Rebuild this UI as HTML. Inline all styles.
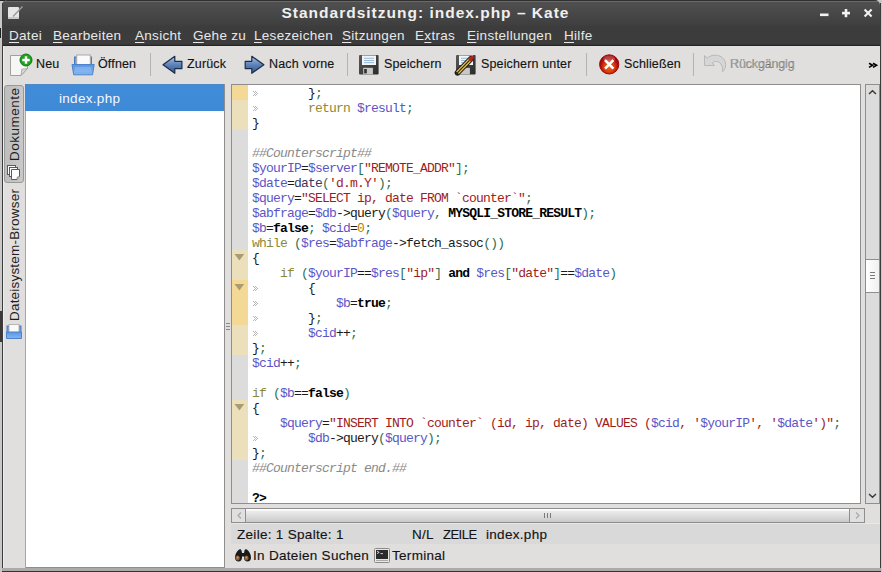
<!DOCTYPE html>
<html><head><meta charset="utf-8">
<style>
*{margin:0;padding:0;box-sizing:border-box}
html,body{width:882px;height:572px;overflow:hidden;background:#c8c8c8;font-family:"Liberation Sans",sans-serif}
.a{position:absolute}
#win{position:absolute;left:2px;top:0;width:878px;height:572px;background:#e0dfdd;overflow:hidden;border-radius:5px 5px 0 0}
#title{position:absolute;left:0;top:0;width:878px;height:46px;background:linear-gradient(#303030 0,#303030 1px,#6a6a6a 1px,#6a6a6a 2px,#505050 2px,#3e3e3e 26px,#3c3c3c 26px,#3c3c3c 44px,#353535 44px,#353535 45px,#262626 45px,#262626 46px)}
#ttext{position:absolute;left:279.5px;top:4px;color:#f0f0f0;font-weight:bold;font-size:15.5px;letter-spacing:1px;white-space:nowrap}
.menu{position:absolute;top:28px;color:#e8e8e8;font-size:13.5px;letter-spacing:0.3px;white-space:nowrap}
.menu u{text-decoration:underline;text-underline-offset:2px}
.tt{position:absolute;top:57px;font-size:12.5px;letter-spacing:0.15px;color:#141414;-webkit-text-stroke:0.15px #141414;white-space:nowrap}
.sep{position:absolute;top:53px;width:1px;height:23px;background:#b5b3b0}
#code{position:absolute;left:252px;top:86px;font-family:"Liberation Mono",monospace;font-size:13px;letter-spacing:-0.8px;line-height:15px;white-space:pre;color:#1a1a1a}
.v{color:#5b55c8}.k{color:#8a8a3a}.b{color:#2f6f50}.s{color:#a01c1c}.c{color:#8a8a8a;font-style:italic}.n{color:#b08000}.K{font-weight:bold;color:#000}.f{color:#3c3660}
.st{position:absolute;font-size:13.5px;letter-spacing:0.3px;color:#141414;-webkit-text-stroke:0.15px #141414;white-space:nowrap}

</style></head><body>
<div id="win">
 <div id="title"></div>
 <div id="ttext">Standardsitzung: index.php – Kate</div>
 <div class="menu" style="left:7px"><u>D</u>atei</div>
 <div class="menu" style="left:51px"><u>B</u>earbeiten</div>
 <div class="menu" style="left:133px"><u>A</u>nsicht</div>
 <div class="menu" style="left:191px"><u>G</u>ehe zu</div>
 <div class="menu" style="left:252px"><u>L</u>esezeichen</div>
 <div class="menu" style="left:340px"><u>S</u>itzungen</div>
 <div class="menu" style="left:413px">E<u>x</u>tras</div>
 <div class="menu" style="left:465px"><u>E</u>instellungen</div>
 <div class="menu" style="left:562px"><u>H</u>ilfe</div>
</div>

<div class="a" style="left:0;top:311px;width:2px;height:31px;background:#3a3a3a"></div>
<div class="a" style="left:0;top:28px;width:1px;height:10px;background:#202020"></div>
<div class="a" style="left:0;top:0;width:5px;height:1px;background:#222"></div>
<!-- title icons -->
<svg class="a" style="left:0;top:0" width="882" height="26">
 <rect x="8" y="7" width="11" height="12" rx="1" fill="#e6e6e6"/>
 <rect x="8" y="17" width="11" height="2" fill="#c8c8c8"/>
 <path d="M13 16.5 L22.5 6.5" stroke="#9a9a9a" stroke-width="1.4"/>
 <rect x="820" y="13.5" width="8.5" height="2.6" fill="#f2f2f2"/>
 <rect x="842" y="11.8" width="8" height="2.6" fill="#f2f2f2"/>
 <rect x="844.7" y="9" width="2.6" height="8.2" fill="#f2f2f2"/>
 <path d="M864.6 9.6 L871.6 16.6 M871.6 9.6 L864.6 16.6" stroke="#f2f2f2" stroke-width="2.1"/>
</svg>

<!-- toolbar icons -->
<svg class="a" style="left:0;top:46px" width="882" height="38">
 <defs>
  <linearGradient id="ar" x1="0" y1="0" x2="0" y2="1"><stop offset="0" stop-color="#a8c4e6"/><stop offset="0.5" stop-color="#5c82b8"/><stop offset="1" stop-color="#35588e"/></linearGradient>
  <linearGradient id="tray" x1="0" y1="0" x2="0" y2="1"><stop offset="0" stop-color="#5b95e0"/><stop offset="1" stop-color="#86b6ef"/></linearGradient>
  <radialGradient id="red" cx="0.5" cy="0.62" r="0.55"><stop offset="0" stop-color="#ee6a12"/><stop offset="0.5" stop-color="#d8400e"/><stop offset="0.78" stop-color="#b81010"/><stop offset="1" stop-color="#940404"/></radialGradient>
  <linearGradient id="fl" x1="0" y1="0" x2="1" y2="1"><stop offset="0" stop-color="#5a5a5a"/><stop offset="1" stop-color="#2a2a2a"/></linearGradient>
 </defs>
 <g transform="translate(0,-46)">
  <!-- Neu -->
  <path d="M10.5 55.5 H27.5 V68.5 L21 75.5 H10.5 Z" fill="#f6f6f6" stroke="#a0a0a0"/>
  <path d="M21 75.5 L21.8 69.2 L27.5 68.5 Z" fill="#d8d8d8" stroke="#a0a0a0" stroke-width="0.8"/>
  <circle cx="26" cy="60" r="6" fill="#22a022" stroke="#0e7a0e" stroke-width="1"/>
  <rect x="22.3" y="58.8" width="7.4" height="2.5" fill="#fff"/>
  <rect x="24.75" y="56.3" width="2.5" height="7.4" fill="#fff"/>
  <!-- Oeffnen -->
  <rect x="74.5" y="57" width="17" height="8" fill="#6f9fd8" stroke="#4a7cc0" stroke-width="1"/>
  <rect x="76.7" y="55" width="13.6" height="10" fill="#fafafa" stroke="#a8a8a8" stroke-width="1"/>
  <path d="M72 64.5 H94.2 L92.5 74.8 H73.7 Z" fill="url(#tray)" stroke="#4d82cc" stroke-width="1"/>
  <rect x="75" y="67" width="16" height="5" fill="#8dbaf0" opacity="0.6"/>
  <!-- Zurueck -->
  <path d="M163 64.8 L174.8 56.3 V61.3 H181.9 V68.6 H174.8 V73.3 Z" fill="url(#ar)" stroke="#1c2c48" stroke-width="1.2" stroke-linejoin="round"/>
  <!-- Nach vorne -->
  <path d="M263.9 64.8 L251.8 56.3 V61.3 H245.2 V68.6 H251.8 V73.3 Z" fill="url(#ar)" stroke="#1c2c48" stroke-width="1.2" stroke-linejoin="round"/>
  <!-- Speichern -->
  <rect x="359" y="55" width="19.6" height="19.6" rx="1" fill="url(#fl)"/>
  <rect x="362" y="55.5" width="14" height="9.5" fill="#f2f4f6"/>
  <rect x="364" y="57.8" width="10" height="0.9" fill="#8eb2d2"/>
  <rect x="364" y="60" width="10" height="0.9" fill="#8eb2d2"/>
  <rect x="364" y="62.2" width="10" height="0.9" fill="#8eb2d2"/>
  <rect x="363.2" y="67.8" width="9.7" height="6.6" fill="#c8c8c8"/>
  <rect x="364.2" y="69" width="2.6" height="4.4" fill="#2e2e2e"/>
  <!-- Speichern unter -->
  <rect x="456" y="55" width="19.6" height="19.6" rx="1" fill="url(#fl)"/>
  <rect x="459" y="55.5" width="14" height="9.5" fill="#f2f4f6"/>
  <rect x="461" y="57.8" width="10" height="0.9" fill="#8eb2d2"/>
  <rect x="461" y="60" width="10" height="0.9" fill="#8eb2d2"/>
  <rect x="461" y="62.2" width="10" height="0.9" fill="#8eb2d2"/>
  <rect x="460.2" y="67.8" width="9.7" height="6.6" fill="#c8c8c8"/>
  <path d="M457.5 72.8 L471 58.8" stroke="#1e1a10" stroke-width="5.6" stroke-linecap="round"/>
  <path d="M457.5 72.8 L471 58.8" stroke="#e6c452" stroke-width="3.8"/>
  <path d="M457.6 72.6 L470.6 59.2" stroke="#2a2208" stroke-width="1.1"/>
  <path d="M470.4 59.4 L471.9 57.9" stroke="#b82020" stroke-width="3.8" stroke-linecap="round"/>
  <path d="M455.5 74.8 L457.8 72.5" stroke="#303030" stroke-width="1.4"/>
  <!-- Schliessen -->
  <circle cx="609.2" cy="64.4" r="9.6" fill="url(#red)" stroke="#9a0808" stroke-width="1"/>
  <ellipse cx="609.2" cy="59" rx="6" ry="3.5" fill="#ffffff" opacity="0.22"/>
  <path d="M605 60.2 L613.4 68.6 M613.4 60.2 L605 68.6" stroke="#fff" stroke-width="2.6"/>
  <!-- Rueckgaengig (disabled) -->
  <path d="M704.5 55.5 L707.2 58.2 C711 54.5 719.5 53.5 723.8 59.2 C727 63.5 725.8 69 722.5 71.8 C723.2 67 721.2 62 716.5 61.4 C714.8 61.3 713.5 62 712.3 63 L714.5 65.5 H704.5 Z" fill="#d6d6d6" stroke="#b8b8b8" stroke-width="1" stroke-linejoin="round"/>
 </g>
</svg>

<div class="tt" style="left:36px">Neu</div>
<div class="tt" style="left:98px">Öffnen</div>
<div class="sep" style="left:150px"></div>
<div class="tt" style="left:187px">Zurück</div>
<div class="tt" style="left:269px">Nach vorne</div>
<div class="sep" style="left:347px"></div>
<div class="tt" style="left:384px">Speichern</div>
<div class="tt" style="left:481px">Speichern unter</div>
<div class="sep" style="left:586px"></div>
<div class="tt" style="left:624px">Schließen</div>
<div class="sep" style="left:693px"></div>
<div class="tt" style="left:730px;color:#a9a7a4;letter-spacing:-0.15px">Rückgängig</div>
<svg class="a" style="left:860px;top:56px" width="20" height="16"><path d="M9 7.2 L12.6 9.3 L9 11.4 M13 7.2 L16.6 9.3 L13 11.4" fill="none" stroke="#000" stroke-width="1.6"/></svg>

<!-- left tab bar -->
<div class="a" style="left:4px;top:85px;width:20px;height:98px;background:linear-gradient(90deg,#bdbdbd,#c9c9c9);border:1px solid #999999;border-radius:3px"></div>
<div class="a" style="left:4px;top:183px;width:20px;height:160px;border:1px solid transparent"></div>
<div class="a" style="left:25px;top:111px;width:1px;height:457px;background:#a4a4a4"></div>
<div class="a" style="left:2px;top:3px;width:1px;height:569px;background:#3c3c3c"></div>
<div class="a" style="left:880px;top:3px;width:1px;height:569px;background:#3c3c3c"></div>
<div class="a" style="left:3px;top:46px;width:1px;height:522px;background:#eeeeee"></div>
<div class="a" style="left:5px;top:86px;width:18px;height:72px;transform-origin:0 0"></div>
<div class="a" style="left:7px;top:160.5px;width:80px;height:16px;transform:rotate(-90deg);transform-origin:0 0;font-size:13.5px;letter-spacing:0.5px;color:#1e1e1e;white-space:nowrap;line-height:16px">Dokumente</div>
<div class="a" style="left:7px;top:320.5px;width:140px;height:16px;transform:rotate(-90deg);transform-origin:0 0;font-size:13.5px;letter-spacing:0.2px;color:#1e1e1e;white-space:nowrap;line-height:16px">Dateisystem-Browser</div>
<svg class="a" style="left:0;top:160px" width="26" height="190">
 <rect x="7.5" y="5.5" width="8" height="9" fill="#ffffff" stroke="#5a5a5a" stroke-width="1"/>
 <rect x="9.5" y="7.5" width="8" height="9" fill="#ffffff" stroke="#5a5a5a" stroke-width="1"/>
 <path d="M11.5 9.5 H19.5 V16.5 L17 19.5 H11.5 Z" fill="#ffffff" stroke="#5a5a5a" stroke-width="1"/>
 <path d="M17 19.5 L17.3 17 L19.5 16.5" fill="#dddddd" stroke="#7a7a7a" stroke-width="0.8"/>
 <rect x="7" y="166" width="14" height="8" fill="#6f9fd8" stroke="#4a7cc0" stroke-width="1"/>
 <rect x="9" y="164.5" width="10" height="8" fill="#fafafa" stroke="#a8a8a8" stroke-width="0.8"/>
 <path d="M6.5 172 H21.5 V178.5 H6.5 Z" fill="url(#tray)" stroke="#4d82cc" stroke-width="1"/>
</svg>

<!-- sidebar list -->
<div class="a" style="left:26px;top:84px;width:199px;height:484px;background:#fff;border-top:1px solid #9c9c9c;border-right:1px solid #8e8e8e;border-bottom:1px solid #8e8e8e"></div>
<div class="a" style="left:25px;top:84px;width:199px;height:27px;background:linear-gradient(#4f88c4 0,#4f88c4 1px,#408cd9 1px,#3e8ad7)"></div>
<div class="a" style="left:59px;top:91px;color:#f4f8ff;font-size:13.5px;letter-spacing:0.3px">index.php</div>
<!-- splitter grip -->
<div class="a" style="left:226px;top:323px;width:4px;height:1px;background:#8a8a8a"></div>
<div class="a" style="left:226px;top:326px;width:4px;height:1px;background:#8a8a8a"></div>
<div class="a" style="left:226px;top:329px;width:4px;height:1px;background:#8a8a8a"></div>

<!-- editor frame -->
<div class="a" style="left:231px;top:84px;width:630px;height:420px;background:#fff;border:1px solid #8e8e8e"></div>
<div class="a" style="left:232px;top:85px;width:16px;height:418px;background:#dcdcdc"></div>
<div class="a" style="left:232px;top:85px;width:16px;height:15px;background:#f4d996"></div>
<div class="a" style="left:232px;top:100px;width:16px;height:30px;background:#ecdfbc"></div>
<div class="a" style="left:232px;top:250px;width:16px;height:105px;background:#ecdfbc"></div>
<div class="a" style="left:232px;top:280px;width:16px;height:45px;background:#f4d996"></div>
<div class="a" style="left:232px;top:400px;width:16px;height:60px;background:#ecdfbc"></div>
<svg class="a" style="left:233px;top:250px" width="14" height="15"><path d="M1.5 4.1 L11.2 4.1 L6.4 10.6 Z" fill="#a89c70"/></svg>
<svg class="a" style="left:233px;top:280px" width="14" height="15"><path d="M1.5 4.1 L11.2 4.1 L6.4 10.6 Z" fill="#a89c70"/></svg>
<svg class="a" style="left:233px;top:400px" width="14" height="15"><path d="M1.5 4.1 L11.2 4.1 L6.4 10.6 Z" fill="#a89c70"/></svg>
<svg class="a" style="left:253px;top:91px" width="5" height="5"><path d="M0 0h1v1h-1zM1 1h1v1h-1zM2 2h1v1h-1zM1 3h1v1h-1zM0 4h1v1h-1zM2 0h1v1h-1zM3 1h1v1h-1zM4 2h1v1h-1zM3 3h1v1h-1zM2 4h1v1h-1z" fill="#b9b9b9"/></svg>
<svg class="a" style="left:253px;top:106px" width="5" height="5"><path d="M0 0h1v1h-1zM1 1h1v1h-1zM2 2h1v1h-1zM1 3h1v1h-1zM0 4h1v1h-1zM2 0h1v1h-1zM3 1h1v1h-1zM4 2h1v1h-1zM3 3h1v1h-1zM2 4h1v1h-1z" fill="#b9b9b9"/></svg>
<svg class="a" style="left:253px;top:286px" width="5" height="5"><path d="M0 0h1v1h-1zM1 1h1v1h-1zM2 2h1v1h-1zM1 3h1v1h-1zM0 4h1v1h-1zM2 0h1v1h-1zM3 1h1v1h-1zM4 2h1v1h-1zM3 3h1v1h-1zM2 4h1v1h-1z" fill="#b9b9b9"/></svg>
<svg class="a" style="left:253px;top:301px" width="5" height="5"><path d="M0 0h1v1h-1zM1 1h1v1h-1zM2 2h1v1h-1zM1 3h1v1h-1zM0 4h1v1h-1zM2 0h1v1h-1zM3 1h1v1h-1zM4 2h1v1h-1zM3 3h1v1h-1zM2 4h1v1h-1z" fill="#b9b9b9"/></svg>
<svg class="a" style="left:253px;top:316px" width="5" height="5"><path d="M0 0h1v1h-1zM1 1h1v1h-1zM2 2h1v1h-1zM1 3h1v1h-1zM0 4h1v1h-1zM2 0h1v1h-1zM3 1h1v1h-1zM4 2h1v1h-1zM3 3h1v1h-1zM2 4h1v1h-1z" fill="#b9b9b9"/></svg>
<svg class="a" style="left:253px;top:331px" width="5" height="5"><path d="M0 0h1v1h-1zM1 1h1v1h-1zM2 2h1v1h-1zM1 3h1v1h-1zM0 4h1v1h-1zM2 0h1v1h-1zM3 1h1v1h-1zM4 2h1v1h-1zM3 3h1v1h-1zM2 4h1v1h-1z" fill="#b9b9b9"/></svg>
<svg class="a" style="left:253px;top:436px" width="5" height="5"><path d="M0 0h1v1h-1zM1 1h1v1h-1zM2 2h1v1h-1zM1 3h1v1h-1zM0 4h1v1h-1zM2 0h1v1h-1zM3 1h1v1h-1zM4 2h1v1h-1zM3 3h1v1h-1zM2 4h1v1h-1z" fill="#b9b9b9"/></svg>

<pre id="code">        }<span class="b">;</span>
        <span class="k">return</span> <span class="v">$result</span><span class="b">;</span>
}

<span class="c">##Counterscript##</span>
<span class="v">$yourIP</span>=<span class="v">$server</span><span class="b">[</span><span class="s">"REMOTE_ADDR"</span><span class="b">]</span><span class="b">;</span>
<span class="v">$date</span>=<span class="f">date</span><span class="b">(</span><span class="s">'d.m.Y'</span><span class="b">)</span><span class="b">;</span>
<span class="v">$query</span>=<span class="s">"SELECT ip, date FROM `counter`"</span><span class="b">;</span>
<span class="v">$abfrage</span>=<span class="v">$db</span>-&gt;query<span class="b">(</span><span class="v">$query</span><span class="b">,</span> <span class="K">MYSQLI_STORE_RESULT</span><span class="b">)</span><span class="b">;</span>
<span class="v">$b</span>=<span class="K">false</span><span class="b">;</span> <span class="v">$cid</span>=<span class="n">0</span><span class="b">;</span>
<span class="k">while</span> <span class="b">(</span><span class="v">$res</span>=<span class="v">$abfrage</span>-&gt;fetch_assoc<span class="b">()</span><span class="b">)</span>
{
    <span class="k">if</span> <span class="b">(</span><span class="v">$yourIP</span>==<span class="v">$res</span><span class="b">[</span><span class="s">"ip"</span><span class="b">]</span> <span class="K">and</span> <span class="v">$res</span><span class="b">[</span><span class="s">"date"</span><span class="b">]</span>==<span class="v">$date</span><span class="b">)</span>
        {
            <span class="v">$b</span>=<span class="K">true</span><span class="b">;</span>
        }<span class="b">;</span>
        <span class="v">$cid</span>++<span class="b">;</span>
}<span class="b">;</span>
<span class="v">$cid</span>++<span class="b">;</span>

<span class="k">if</span> <span class="b">(</span><span class="v">$b</span>==<span class="K">false</span><span class="b">)</span>
{
    <span class="v">$query</span>=<span class="s">"INSERT INTO `counter` (id, ip, date) VALUES (</span><span class="v">$cid</span><span class="s">, '</span><span class="v">$yourIP</span><span class="s">', '</span><span class="v">$date</span><span class="s">')"</span><span class="b">;</span>
        <span class="v">$db</span>-&gt;query<span class="b">(</span><span class="v">$query</span><span class="b">)</span><span class="b">;</span>
}<span class="b">;</span>
<span class="c">##Counterscript end.##</span>

<span class="K">?&gt;</span></pre>

<!-- vertical scrollbar -->
<div class="a" style="left:865px;top:84px;width:15px;height:420px;background:#dcdcdc;border:1px solid #8e8e8e"></div>
<div class="a" style="left:866px;top:259px;width:13px;height:34px;background:linear-gradient(90deg,#ffffff,#f0f0f0);border-top:1px solid #8e8e8e;border-bottom:1px solid #8e8e8e"></div>
<div class="a" style="left:870px;top:272px;width:5px;height:1px;background:#7a7a7a"></div>
<div class="a" style="left:870px;top:275px;width:5px;height:1px;background:#7a7a7a"></div>
<div class="a" style="left:870px;top:278px;width:5px;height:1px;background:#7a7a7a"></div>
<svg class="a" style="left:865px;top:84px" width="15" height="420">
 <path d="M4 10 L7.5 6.8 L11 10" fill="none" stroke="#3a3a3a" stroke-width="1.5"/>
 <path d="M4 410 L7.5 413.2 L11 410" fill="none" stroke="#3a3a3a" stroke-width="1.5"/>
</svg>

<!-- horizontal scrollbar -->
<div class="a" style="left:231px;top:508px;width:634px;height:15px;background:#dcdcdc;border:1px solid #8e8e8e"></div>
<div class="a" style="left:232px;top:509px;width:14px;height:13px;background:#e0e0e0;border-right:1px solid #8e8e8e"></div>
<div class="a" style="left:849px;top:509px;width:15px;height:13px;background:#e0e0e0;border-left:1px solid #8e8e8e"></div>
<div class="a" style="left:246px;top:509px;width:603px;height:13px;background:linear-gradient(#ffffff 0,#ffffff 1px,#ececec 2px,#dcdcdc 55%,#c9c9c9)"></div>
<div class="a" style="left:544px;top:513px;width:1px;height:5px;background:#7a7a7a"></div>
<div class="a" style="left:547px;top:513px;width:1px;height:5px;background:#7a7a7a"></div>
<div class="a" style="left:550px;top:513px;width:1px;height:5px;background:#7a7a7a"></div>
<svg class="a" style="left:231px;top:508px" width="634" height="15">
 <path d="M10 4.5 L7 7.5 L10 10.5" fill="none" stroke="#a8a8a8" stroke-width="1.2"/>
 <path d="M625 4.5 L628 7.5 L625 10.5" fill="none" stroke="#a8a8a8" stroke-width="1.2"/>
</svg>

<!-- status bar -->
<div class="a" style="left:231px;top:523px;width:649px;height:1px;background:#e8e8e8"></div>
<div class="a" style="left:231px;top:524px;width:649px;height:20px;background:#d9d9d9"></div>
<div class="st" style="left:237px;top:527px">Zeile: 1 Spalte: 1</div>
<div class="st" style="left:412px;top:527px">N/L</div>
<div class="st" style="left:443px;top:527px;letter-spacing:-0.5px;font-size:13px">ZEILE</div>
<div class="st" style="left:486px;top:527px">index.php</div>

<!-- bottom bar -->
<svg class="a" style="left:230px;top:544px" width="170" height="24">
 <path d="M5 13.5 C5 10 7 7.5 8.5 6 C9.5 5 11 5 11.5 6.5 L12 9 H14 L14.5 6.5 C15 5 16.5 5 17.5 6 C19 7.5 21 10 21 13.5 C21 16 19.5 17.5 17.5 17.5 C15.5 17.5 14 16 14 13.8 V12.5 H12 V13.8 C12 16 10.5 17.5 8.5 17.5 C6.5 17.5 5 16 5 13.5 Z" fill="#1a1a1a"/>
 <ellipse cx="7.6" cy="14" rx="2.2" ry="2.5" fill="#8b5e3a"/>
 <ellipse cx="16.4" cy="14" rx="2.2" ry="2.5" fill="#8b5e3a"/>
 <ellipse cx="7.6" cy="13.5" rx="1" ry="1.1" fill="#c49a70"/>
 <ellipse cx="16.4" cy="13.5" rx="1" ry="1.1" fill="#c49a70"/>
 <rect x="144.5" y="4.5" width="15" height="14" rx="1" fill="#e8e8e8" stroke="#8a8a8a"/>
 <rect x="146" y="6" width="12" height="9" fill="#2c2c2c"/>
 <path d="M147 7.2 L149.2 8.4 L147 9.6" fill="none" stroke="#e0e0e0" stroke-width="0.9"/>
 <rect x="150.5" y="9.2" width="2.5" height="0.9" fill="#e0e0e0"/>
 <rect x="146" y="16.2" width="12" height="0.8" fill="#9a9a9a"/>
</svg>
<div class="st" style="left:253px;top:548px">In Dateien Suchen</div>
<div class="st" style="left:392px;top:548px">Terminal</div>
<div class="a" style="left:2px;top:568px;width:879px;height:3px;background:#aaaaaa"></div>
<div class="a" style="left:2px;top:571px;width:879px;height:1px;background:#333333"></div>

</body></html>
